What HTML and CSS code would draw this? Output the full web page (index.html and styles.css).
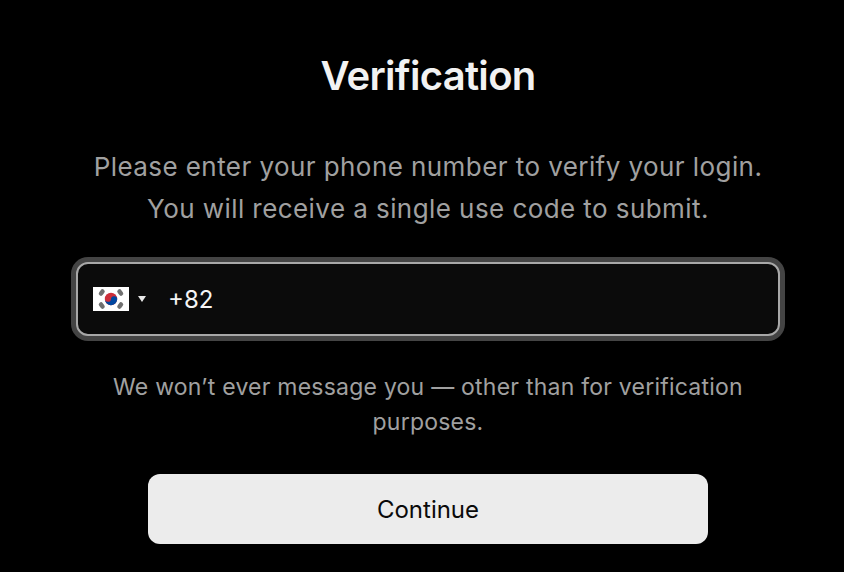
FILE: index.html
```html
<!DOCTYPE html>
<html lang="en">
<head>
    <meta charset="UTF-8">
    <meta name="viewport" content="width=device-width, initial-scale=1.0">
    <title>Verification</title>
    <link rel="stylesheet" href="styles.css">
</head>
<body>
    <div class="container">
        <h1>Verification</h1>
        <p class="intro">Please enter your phone number to verify your login.<br>You will receive a single use code to submit.</p>
        <div class="phone-field">
            <div class="country">
                <svg class="flag" viewBox="0 0 36 24" width="36" height="24">
                    <rect width="36" height="24" fill="#fff"/>
                    <g stroke="#707070" stroke-width="4.500" stroke-linecap="round">
                        <path d="M8 6.500 9.500 4.500M26.500 4.500 28 6.500M8 17.500 9.500 19.500M26.500 19.500 28 17.500"/>
                    </g>
                    <circle cx="18" cy="12" r="6.200" fill="#cd2e3a"/>
                    <path d="M11.800 11.500a3 3 0 0 0 6.200 .5 3 3 0 0 1 6.200 .5A6.200 6.200 0 0 1 11.800 11.500z" fill="#0047a0"/>
                </svg>
                <span class="arrow"></span>
            </div>
            <span class="dial-code">+82</span>
        </div>
        <p class="note">We won’t ever message you — other than for verification purposes.</p>
        <button class="continue">Continue</button>
    </div>
</body>
</html>
```

FILE: styles.css
```css
html, body {
    height: 100%;
}
body {
    margin: 0;
    padding-left: 12px;
    background: #000;
    color: #a0a0a0;
    font-family: Inter, "Liberation Sans", sans-serif;
    overflow: hidden;
}
.container {
    width: 704px;
    margin: 0 auto;
    padding-top: 51px;
    text-align: center;
}
h1 {
    margin: 0;
    color: #f2f2f2;
    font-size: 40px;
    line-height: 50px;
    font-weight: 600;
    letter-spacing: -0.7px;
}
.intro {
    margin: 45px -10px 0;
    font-size: 26px;
    line-height: 42px;
    letter-spacing: 0.43px;
}
.phone-field {
    display: flex;
    align-items: center;
    box-sizing: border-box;
    height: 74px;
    margin-top: 32px;
    padding-left: 15px;
    background: #0b0b0b;
    border: 2px solid #a8a8a8;
    border-radius: 12px;
    box-shadow: 0 0 0 5px #444;
}
.country {
    display: flex;
    align-items: center;
    gap: 9px;
    width: 75px;
}
.flag {
    display: block;
}
.arrow {
    width: 0;
    height: 0;
    border-left: 4px solid transparent;
    border-right: 4px solid transparent;
    border-top: 6px solid #e8e8e8;
}
.dial-code {
    color: #f5f5f5;
    font-size: 24px;
}
.note {
    width: 660px;
    margin: 34px auto 0;
    font-size: 23px;
    line-height: 35px;
    letter-spacing: 0.23px;
}
.continue {
    display: block;
    width: 560px;
    height: 70px;
    margin: 34px auto 0;
    background: #ececec;
    border: none;
    border-radius: 12px;
    color: #0a0a0a;
    font-family: inherit;
    font-size: 24px;
    font-weight: 400;
}
```
